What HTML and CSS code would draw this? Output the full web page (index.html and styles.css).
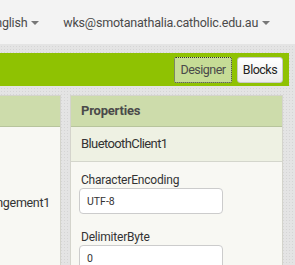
FILE: index.html
```html
<!DOCTYPE html>
<html lang="en">
<head>
    <meta charset="UTF-8">
    <title>Designer</title>
    <link rel="stylesheet" href="styles.css">
</head>
<body>

    <div class="topbar">
        <span class="menu">English <span class="caret"></span></span>
        <span class="menu">wks@smotanathalia.catholic.edu.au <span class="caret"></span></span>
    </div>

    <div class="toolbar">
        <button class="tab active">Designer</button>
        <button class="tab">Blocks</button>
    </div>

    <div class="workspace">
        <div class="panel tree">
            <div class="panel-head"></div>
            <div class="panel-body">
                <div class="tree-item">HorizontalArrangement1</div>
            </div>
        </div>

        <div class="panel props">
            <div class="panel-head">Properties</div>
            <div class="panel-sub">BluetoothClient1</div>
            <div class="panel-body">
                <label class="prop-label">CharacterEncoding</label>
                <input class="prop-input" type="text" value="UTF-8">

                <label class="prop-label">DelimiterByte</label>
                <input class="prop-input" type="text" value="0">
            </div>
        </div>
    </div>

</body>
</html>
```

FILE: styles.css
```css
body {
    margin: 0;
    width: 295px;
    height: 265px;
    overflow: hidden;
    font-family: Roboto, "Liberation Sans", sans-serif;
    background-color: #e4e4e4;
    background-image: radial-gradient(#d5d5d5 1px, transparent 1px);
    background-size: 3px 3px;
}
.topbar {
    height: 44px;
    background-color: #f3f3f3;
    display: flex;
    justify-content: flex-end;
    align-items: center;
    gap: 24px;
    padding-right: 25px;
    white-space: nowrap;
    overflow: hidden;
}
.menu {
    font-size: 12.5px;
    letter-spacing: -0.2px;
    color: #4a4a4a;
}
.caret {
    display: inline-block;
    width: 0;
    height: 0;
    border-left: 4px solid transparent;
    border-right: 4px solid transparent;
    border-top: 4px solid #777;
    vertical-align: middle;
    margin-left: 1px;
}
.toolbar {
    margin-top: 9px;
    width: 289px;
    height: 33px;
    background-color: #8fc202;
    display: flex;
    justify-content: flex-end;
    align-items: center;
    gap: 5px;
    padding-right: 6px;
    box-sizing: border-box;
}
.tab {
    width: 46px;
    height: 26px;
    padding: 0;
    text-align: center;
    font-family: Roboto, "Liberation Sans", sans-serif;
    font-size: 12.5px;
    letter-spacing: -0.5px;
    color: #222;
    background: linear-gradient(#ffffff, #ececec);
    border: 1px solid #c9c9c9;
    border-radius: 3px;
}
.tab.active {
    width: 58px;
    color: #4a4a4a;
    background: #c6dc96;
    border: 1px dotted #333;
    border-radius: 2px;
}
.workspace {
    display: flex;
    gap: 9px;
    margin-top: 9px;
}
.panel {
    background-color: #f8f8f3;
    border: 1px solid #d4d4cc;
    height: 170px;
    overflow: hidden;
}
.tree {
    width: 61px;
    margin-left: -2px;
    display: flex;
    flex-direction: column;
    align-items: flex-end;
}
.props {
    width: 211px;
}
.panel-head {
    height: 30px;
    background-color: #cddcab;
    border-bottom: 1px solid #b7c49c;
    font-size: 13px;
    letter-spacing: -0.2px;
    font-weight: bold;
    color: #4a4a4a;
    line-height: 30px;
    padding-left: 10px;
    align-self: stretch;
}
.panel-sub {
    height: 34px;
    background-color: #eef1e3;
    border-bottom: 1px solid #d4d6cc;
    font-size: 13px;
    letter-spacing: -0.6px;
    color: #333;
    line-height: 34px;
    padding-left: 10px;
}
.panel-body {
    padding: 11px 8px;
    display: flex;
    flex-direction: column;
    align-items: flex-start;
}
.tree .panel-body {
    padding: 68px 0 0 0;
    align-items: flex-end;
}
.tree-item {
    font-size: 12.5px;
    letter-spacing: -0.3px;
    color: #333;
    white-space: nowrap;
    margin-right: 10px;
}
.prop-label {
    font-size: 12px;
    letter-spacing: -0.2px;
    color: #333;
    line-height: 14px;
    margin-left: 2px;
    margin-bottom: 1px;
}
.prop-input {
    width: 144px;
    height: 26px;
    box-sizing: border-box;
    border: 1px solid #cccccc;
    border-radius: 4px;
    background-color: #fff;
    padding: 0 7px;
    font-family: Roboto, "Liberation Sans", sans-serif;
    font-size: 10.5px;
    color: #333;
    margin-bottom: 16px;
}
```
